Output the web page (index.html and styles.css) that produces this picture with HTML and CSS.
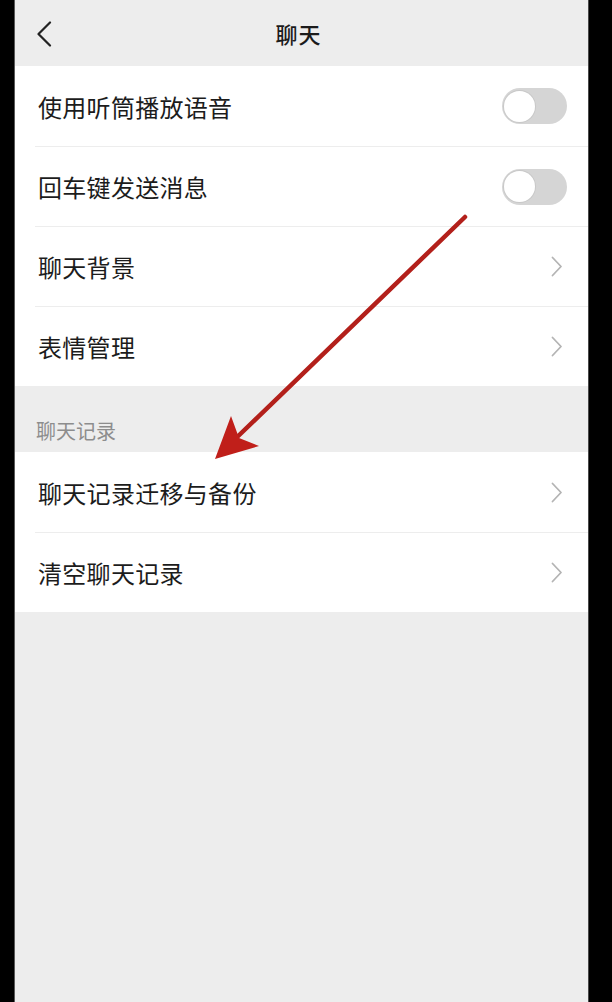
FILE: index.html
```html
<!DOCTYPE html>
<html lang="zh-CN">
<head>
<meta charset="utf-8">
<title>聊天</title>
<link rel="stylesheet" href="styles.css">
</head>
<body>
<div class="screen">
  <header class="topbar">
    <span class="back">
      <svg width="16" height="26" viewBox="0 0 16 26"><path d="M14 1.5 L2.5 13 L14 24.5" fill="none" stroke="#222" stroke-width="2.2" stroke-linecap="round" stroke-linejoin="round"/></svg>
    </span>
    <h1 class="title">聊天</h1>
    <span></span>
  </header>

  <section class="group">
    <div class="row"><div class="row-inner"><span class="label">使用听筒播放语音</span><span class="toggle"><span class="knob"></span></span></div></div>
    <div class="row"><div class="row-inner bordered"><span class="label">回车键发送消息</span><span class="toggle"><span class="knob"></span></span></div></div>
    <div class="row"><div class="row-inner bordered"><span class="label">聊天背景</span><span class="chev"><svg width="12" height="21" viewBox="0 0 12 21"><path d="M1.5 1.5 L10 10.5 L1.5 19.5" fill="none" stroke="#b4b4b4" stroke-width="1.8" stroke-linecap="round" stroke-linejoin="round"/></svg></span></div></div>
    <div class="row"><div class="row-inner bordered"><span class="label">表情管理</span><span class="chev"><svg width="12" height="21" viewBox="0 0 12 21"><path d="M1.5 1.5 L10 10.5 L1.5 19.5" fill="none" stroke="#b4b4b4" stroke-width="1.8" stroke-linecap="round" stroke-linejoin="round"/></svg></span></div></div>
  </section>

  <div class="section-title">聊天记录</div>

  <section class="group">
    <div class="row"><div class="row-inner"><span class="label">聊天记录迁移与备份</span><span class="chev"><svg width="12" height="21" viewBox="0 0 12 21"><path d="M1.5 1.5 L10 10.5 L1.5 19.5" fill="none" stroke="#b4b4b4" stroke-width="1.8" stroke-linecap="round" stroke-linejoin="round"/></svg></span></div></div>
    <div class="row"><div class="row-inner bordered"><span class="label">清空聊天记录</span><span class="chev"><svg width="12" height="21" viewBox="0 0 12 21"><path d="M1.5 1.5 L10 10.5 L1.5 19.5" fill="none" stroke="#b4b4b4" stroke-width="1.8" stroke-linecap="round" stroke-linejoin="round"/></svg></span></div></div>
  </section>

  <svg class="arrow" width="612" height="1002" viewBox="0 0 612 1002">
    <line x1="465" y1="217" x2="232" y2="442" stroke="#b3201b" stroke-width="4.5" stroke-linecap="round"/>
    <polygon points="215,459 231,416 239,438 259,446" fill="#c01f1a"/>
  </svg>
</div>
</body>
</html>
```

FILE: styles.css
```css
html, body {
  margin: 0;
  padding: 0;
  background: #000;
}
body {
  width: 612px;
  height: 1002px;
  overflow: hidden;
  font-family: "Noto Sans CJK SC", "Noto Sans", sans-serif;
}
.screen {
  margin-left: 14px;
  width: 573px;
  height: 1002px;
  background: #ededed;
  border-left: 1px solid #5a5a5a;
  border-right: 1px solid #4a4a4a;
}
.topbar {
  height: 66px;
  display: grid;
  grid-template-columns: 1fr auto 1fr;
  align-items: center;
  background: #ededed;
}
.back {
  padding-left: 21px;
  display: flex;
  align-items: center;
  padding-top: 1px;
}
.title {
  margin: 0;
  font-size: 22px;
  font-weight: 500;
  color: #1b1b1b;
  letter-spacing: 1px;
  position: relative;
  left: -3px;
}
.group {
  background: #fff;
}
.row {
  padding-left: 20px;
}
.row-inner {
  height: 80px;
  box-sizing: border-box;
  display: flex;
  align-items: center;
  justify-content: space-between;
  padding-left: 3px;
  padding-right: 21px;
}
.row-inner.bordered {
  border-top: 1px solid #ededed;
}
.label {
  font-size: 24px;
  color: #1c1c1c;
  letter-spacing: 0.3px;
}
.toggle {
  width: 65px;
  height: 36px;
  border-radius: 18px;
  background: #d5d5d5;
  display: flex;
  align-items: center;
  padding: 0 2px;
  box-sizing: border-box;
}
.knob {
  width: 31px;
  height: 31px;
  border-radius: 50%;
  background: #fff;
  box-shadow: 0 0 0 1px #c8c8c8;
}
.chev {
  display: flex;
  align-items: center;
  padding-right: 4px;
}
.section-title {
  height: 66px;
  box-sizing: border-box;
  display: flex;
  align-items: flex-end;
  padding: 0 0 9px 21px;
  font-size: 20px;
  line-height: 24px;
  color: #8d8d8d;
}
.arrow {
  position: absolute;
  left: 0;
  top: 0;
  pointer-events: none;
}
```
